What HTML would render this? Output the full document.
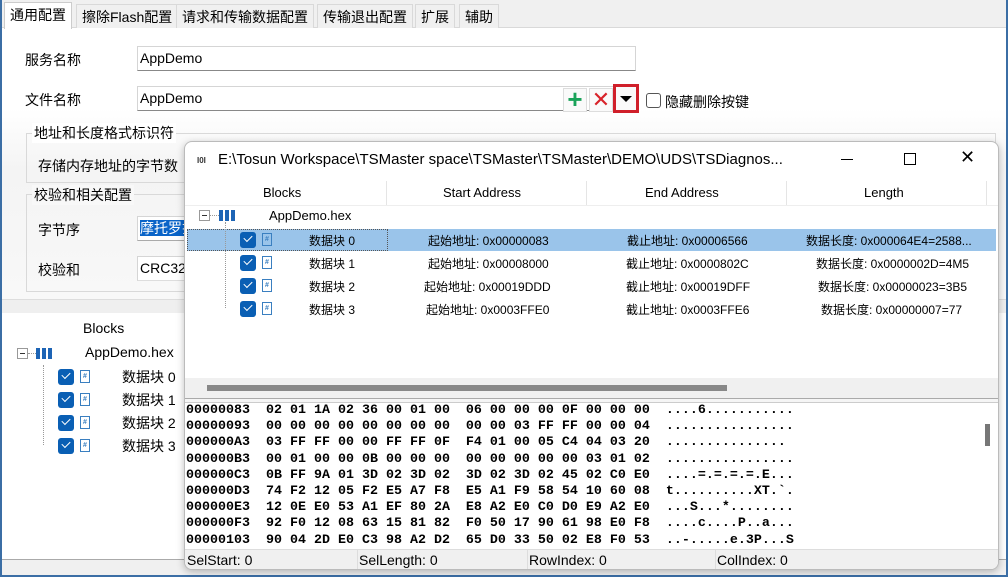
<!DOCTYPE html>
<html><head><meta charset="utf-8"><style>
*{box-sizing:border-box;margin:0;padding:0}
body{width:1008px;height:577px;position:relative;overflow:hidden;background:#fff;font-family:"Liberation Sans","Noto Sans CJK SC",sans-serif;font-size:14px;color:#000}
.a{position:absolute}
.tab{position:absolute;top:4px;height:24px;line-height:24px;font-size:14px;padding:0 5px;background:#f0f0f0;border:1px solid #d9d9d9;border-bottom:none}
.inp{position:absolute;height:25px;border:1px solid #d5d5d5;border-bottom:1px solid #888;background:#fff;padding-left:2px;line-height:23px;font-size:14px}
.cb{position:absolute;width:16px;height:16px;background:#0a5fb4;border-radius:3px}
.cb:after{content:"";position:absolute;left:4px;top:3px;width:7px;height:4px;border-left:1.5px solid #fff;border-bottom:1.5px solid #fff;transform:rotate(-45deg)}
.hi{position:absolute;width:10px;height:13px;border:1px solid #3a7fc0;font-size:7px;line-height:11px;text-align:center;color:#3a7fc0;font-weight:bold}
.grid{position:absolute;width:16px;height:11px;background:linear-gradient(90deg,#1d64b5 0 4px,#fff 4px 6px,#1d64b5 6px 10px,#fff 10px 12px,#1d64b5 12px 16px)}
.minus{position:absolute;width:11px;height:11px;border:1px solid #999;background:#fff}
.minus:after{content:"";position:absolute;left:2px;top:4px;width:5px;height:1px;background:#333}
.hx{font-family:"Liberation Mono",monospace;font-weight:bold;font-size:13.33px;white-space:pre;line-height:16.2px;position:absolute;left:186px;top:403px}
.ct{position:absolute;font-size:12px;white-space:nowrap}
</style></head><body>
<div class="a" style="left:0;top:0;width:1008px;height:577px;border-left:2px solid #3b6ea5;border-right:2px solid #3b6ea5;border-bottom:2px solid #3b6ea5"></div>
<div class="a" style="left:2px;top:0;width:1004px;height:28px;background:#f0f0f0;border-bottom:1px solid #d9d9d9"></div>
<div class="tab" style="left:4px;top:2px;height:27px;background:#fff;border-color:#ccc">通用配置</div>
<div class="tab" style="left:76px">擦除Flash配置</div>
<div class="tab" style="left:176px">请求和传输数据配置</div>
<div class="tab" style="left:317px">传输退出配置</div>
<div class="tab" style="left:415px">扩展</div>
<div class="tab" style="left:459px">辅助</div>
<div class="a" style="left:2px;top:29px;width:1004px;height:270px;background:linear-gradient(#fff 0,#fff 80px,#f4f4f4 140px,#f8f8f8)"></div>
<div class="a" style="left:25px;top:50px">服务名称</div>
<div class="inp" style="left:137px;top:46px;width:499px">AppDemo</div>
<div class="a" style="left:25px;top:90px">文件名称</div>
<div class="inp" style="left:137px;top:86px;width:499px">AppDemo</div>
<div class="a" style="left:563px;top:88px;width:24px;height:24px;border:1px solid #ddd;background:#fafafa;color:#1aa35a;font-size:26px;line-height:20px;text-align:center;font-weight:bold">+</div>
<div class="a" style="left:589px;top:88px;width:24px;height:24px;border:1px solid #ddd;background:#fafafa;color:#d8232a;font-size:22px;line-height:22px;text-align:center">✕</div>
<div class="a" style="left:613px;top:84px;width:26px;height:29px;border:3px solid #d01f2a;background:#fafafa"></div>
<div class="a" style="left:620px;top:96px;width:0;height:0;border-left:6px solid transparent;border-right:6px solid transparent;border-top:6px solid #000"></div>
<div class="a" style="left:646px;top:93px;width:15px;height:15px;border:1px solid #555;border-radius:3px;background:#fff"></div>
<div class="a" style="left:665px;top:92px">隐藏删除按键</div>
<div class="a" style="left:26px;top:133px;width:970px;height:50px;border:1px solid #d9d9d9"></div>
<div class="a" style="left:32px;top:123px;background:#fff;padding:0 2px">地址和长度格式标识符</div>
<div class="a" style="left:38px;top:156px">存储内存地址的字节数</div>
<div class="a" style="left:26px;top:194px;width:970px;height:98px;border:1px solid #d9d9d9"></div>
<div class="a" style="left:32px;top:185px;background:#f8f8f8;padding:0 2px">校验和相关配置</div>
<div class="a" style="left:38px;top:220px">字节序</div>
<div class="inp" style="left:137px;top:216px;width:60px;border-bottom-color:#aaa"><span style="background:#0a64c8;color:#fff">摩托罗拉</span></div>
<div class="a" style="left:38px;top:260px">校验和</div>
<div class="inp" style="left:137px;top:256px;width:60px;border-bottom-color:#ddd">CRC32</div>
<div class="a" style="left:2px;top:299px;width:1004px;height:14px;background:#efefef;border-top:1px solid #ddd"></div>
<div class="a" style="left:83px;top:320px">Blocks</div>
<div class="minus" style="left:17px;top:348px"></div>
<div class="a" style="left:28px;top:353px;width:8px;border-top:1px dotted #999"></div>
<div class="grid" style="left:36px;top:348px"></div>
<div class="a" style="left:85px;top:344px">AppDemo.hex</div>
<div class="a" style="left:43px;top:365px;height:80px;border-left:1px dotted #999"></div>
<div class="cb" style="left:58px;top:369px"></div><div class="hi" style="left:80px;top:370px">#</div><div class="a" style="left:122px;top:367px">数据块 0</div>
<div class="cb" style="left:58px;top:392px"></div><div class="hi" style="left:80px;top:393px">#</div><div class="a" style="left:122px;top:390px">数据块 1</div>
<div class="cb" style="left:58px;top:415px"></div><div class="hi" style="left:80px;top:416px">#</div><div class="a" style="left:122px;top:413px">数据块 2</div>
<div class="cb" style="left:58px;top:438px"></div><div class="hi" style="left:80px;top:439px">#</div><div class="a" style="left:122px;top:436px">数据块 3</div>
<div class="a" style="left:2px;top:559px;width:1004px;height:16px;background:#f0f0f0;border-top:1px solid #aaa"></div>

<div class="a" style="left:184px;top:141px;width:815px;height:429px;background:#fff;border:1px solid #bbb;border-radius:8px;box-shadow:0 2px 8px rgba(0,0,0,.25);overflow:hidden">
<div class="a" style="left:12px;top:14px;font-size:8px;font-weight:bold;color:#333">I0I</div>
<div class="a" style="left:33px;top:9px;font-size:15px">E:\Tosun Workspace\TSMaster space\TSMaster\TSMaster\DEMO\UDS\TSDiagnos...</div>
<div class="a" style="left:656px;top:17px;width:12px;border-top:1px solid #000"></div>
<div class="a" style="left:719px;top:11px;width:12px;height:12px;border:1px solid #000"></div>
<div class="a" style="left:775px;top:5px;font-size:18px">✕</div>
<div class="a" style="left:0;top:38px;width:815px;height:26px;border-bottom:1px solid #eee"></div>
<div class="a" style="left:201px;top:39px;height:24px;border-left:1px solid #e5e5e5"></div>
<div class="a" style="left:401px;top:39px;height:24px;border-left:1px solid #e5e5e5"></div>
<div class="a" style="left:601px;top:39px;height:24px;border-left:1px solid #e5e5e5"></div>
<div class="a" style="left:801px;top:39px;height:24px;border-left:1px solid #e5e5e5"></div>
<div class="ct" style="left:78px;top:43px;font-size:13px">Blocks</div>
<div class="ct" style="left:258px;top:43px;font-size:13px">Start Address</div>
<div class="ct" style="left:460px;top:43px;font-size:13px">End Address</div>
<div class="ct" style="left:679px;top:43px;font-size:13px">Length</div>
<div class="minus" style="left:14px;top:68px"></div>
<div class="a" style="left:25px;top:73px;width:9px;border-top:1px dotted #999"></div>
<div class="grid" style="left:34px;top:68px"></div>
<div class="ct" style="left:84px;top:66px;font-size:13px">AppDemo.hex</div>
<div class="a" style="left:2px;top:87px;width:809px;height:22px;background:#9ac4ea"></div>
<div class="a" style="left:2px;top:87px;width:201px;height:22px;border:1px dotted #555"></div>
<div class="a" style="left:40px;top:80px;height:86px;border-left:1px dotted #999"></div>
<div class="cb" style="left:55px;top:90px"></div><div class="hi" style="left:77px;top:91px">#</div>
<div class="cb" style="left:55px;top:113px"></div><div class="hi" style="left:77px;top:114px">#</div>
<div class="cb" style="left:55px;top:136px"></div><div class="hi" style="left:77px;top:137px">#</div>
<div class="cb" style="left:55px;top:159px"></div><div class="hi" style="left:77px;top:160px">#</div>
<div class="ct" style="left:124px;top:90px">数据块 0</div><div class="ct" style="left:243px;top:90px">起始地址: 0x00000083</div><div class="ct" style="left:442px;top:90px">截止地址: 0x00006566</div><div class="ct" style="left:621px;top:90px">数据长度: 0x000064E4=2588...</div>
<div class="ct" style="left:124px;top:113px">数据块 1</div><div class="ct" style="left:243px;top:113px">起始地址: 0x00008000</div><div class="ct" style="left:441px;top:113px">截止地址: 0x0000802C</div><div class="ct" style="left:631px;top:113px">数据长度: 0x0000002D=4M5</div>
<div class="ct" style="left:239px;top:136px">起始地址: 0x00019DDD</div><div class="ct" style="left:124px;top:136px">数据块 2</div><div class="ct" style="left:441px;top:136px">截止地址: 0x00019DFF</div><div class="ct" style="left:633px;top:136px">数据长度: 0x00000023=3B5</div>
<div class="ct" style="left:124px;top:159px">数据块 3</div><div class="ct" style="left:241px;top:159px">起始地址: 0x0003FFE0</div><div class="ct" style="left:441px;top:159px">截止地址: 0x0003FFE6</div><div class="ct" style="left:636px;top:159px">数据长度: 0x00000007=77</div>
<div class="a" style="left:0;top:236px;width:815px;height:20px;background:#f0f0f0"></div>
<div class="a" style="left:22px;top:243px;width:520px;height:6px;background:#888"></div>
<div class="a" style="left:0;top:256px;width:815px;height:5px;border-top:1px solid #aaa;border-bottom:1px solid #ccc;background:#f5f5f5"></div>
<div class="a" style="left:800px;top:282px;width:5px;height:22px;background:#777"></div>
<div class="a" style="left:0;top:407px;width:815px;height:22px;background:#f0f0f0;border-top:1px solid #ddd"></div>
<div class="ct" style="left:2px;top:410px;font-size:14px">SelStart: 0</div>
<div class="a" style="left:172px;top:407px;height:22px;border-left:1px solid #ddd"></div>
<div class="ct" style="left:174px;top:410px;font-size:14px">SelLength: 0</div>
<div class="a" style="left:342px;top:407px;height:22px;border-left:1px solid #ddd"></div>
<div class="ct" style="left:344px;top:410px;font-size:14px">RowIndex: 0</div>
<div class="a" style="left:530px;top:407px;height:22px;border-left:1px solid #ddd"></div>
<div class="ct" style="left:532px;top:410px;font-size:14px">ColIndex: 0</div>
</div>
<div class="hx">00000083  02 01 1A 02 36 00 01 00  06 00 00 00 0F 00 00 00  ....6...........
00000093  00 00 00 00 00 00 00 00  00 00 03 FF FF 00 00 04  ................
000000A3  03 FF FF 00 00 FF FF 0F  F4 01 00 05 C4 04 03 20  ...............
000000B3  00 01 00 00 0B 00 00 00  00 00 00 00 00 03 01 02  ................
000000C3  0B FF 9A 01 3D 02 3D 02  3D 02 3D 02 45 02 C0 E0  ....=.=.=.=.E...
000000D3  74 F2 12 05 F2 E5 A7 F8  E5 A1 F9 58 54 10 60 08  t..........XT.`.
000000E3  12 0E E0 53 A1 EF 80 2A  E8 A2 E0 C0 D0 E9 A2 E0  ...S...*........
000000F3  92 F0 12 08 63 15 81 82  F0 50 17 90 61 98 E0 F8  ....c....P..a...
00000103  90 04 2D E0 C3 98 A2 D2  65 D0 33 50 02 E8 F0 53  ..-.....e.3P...S</div>
</body></html>
